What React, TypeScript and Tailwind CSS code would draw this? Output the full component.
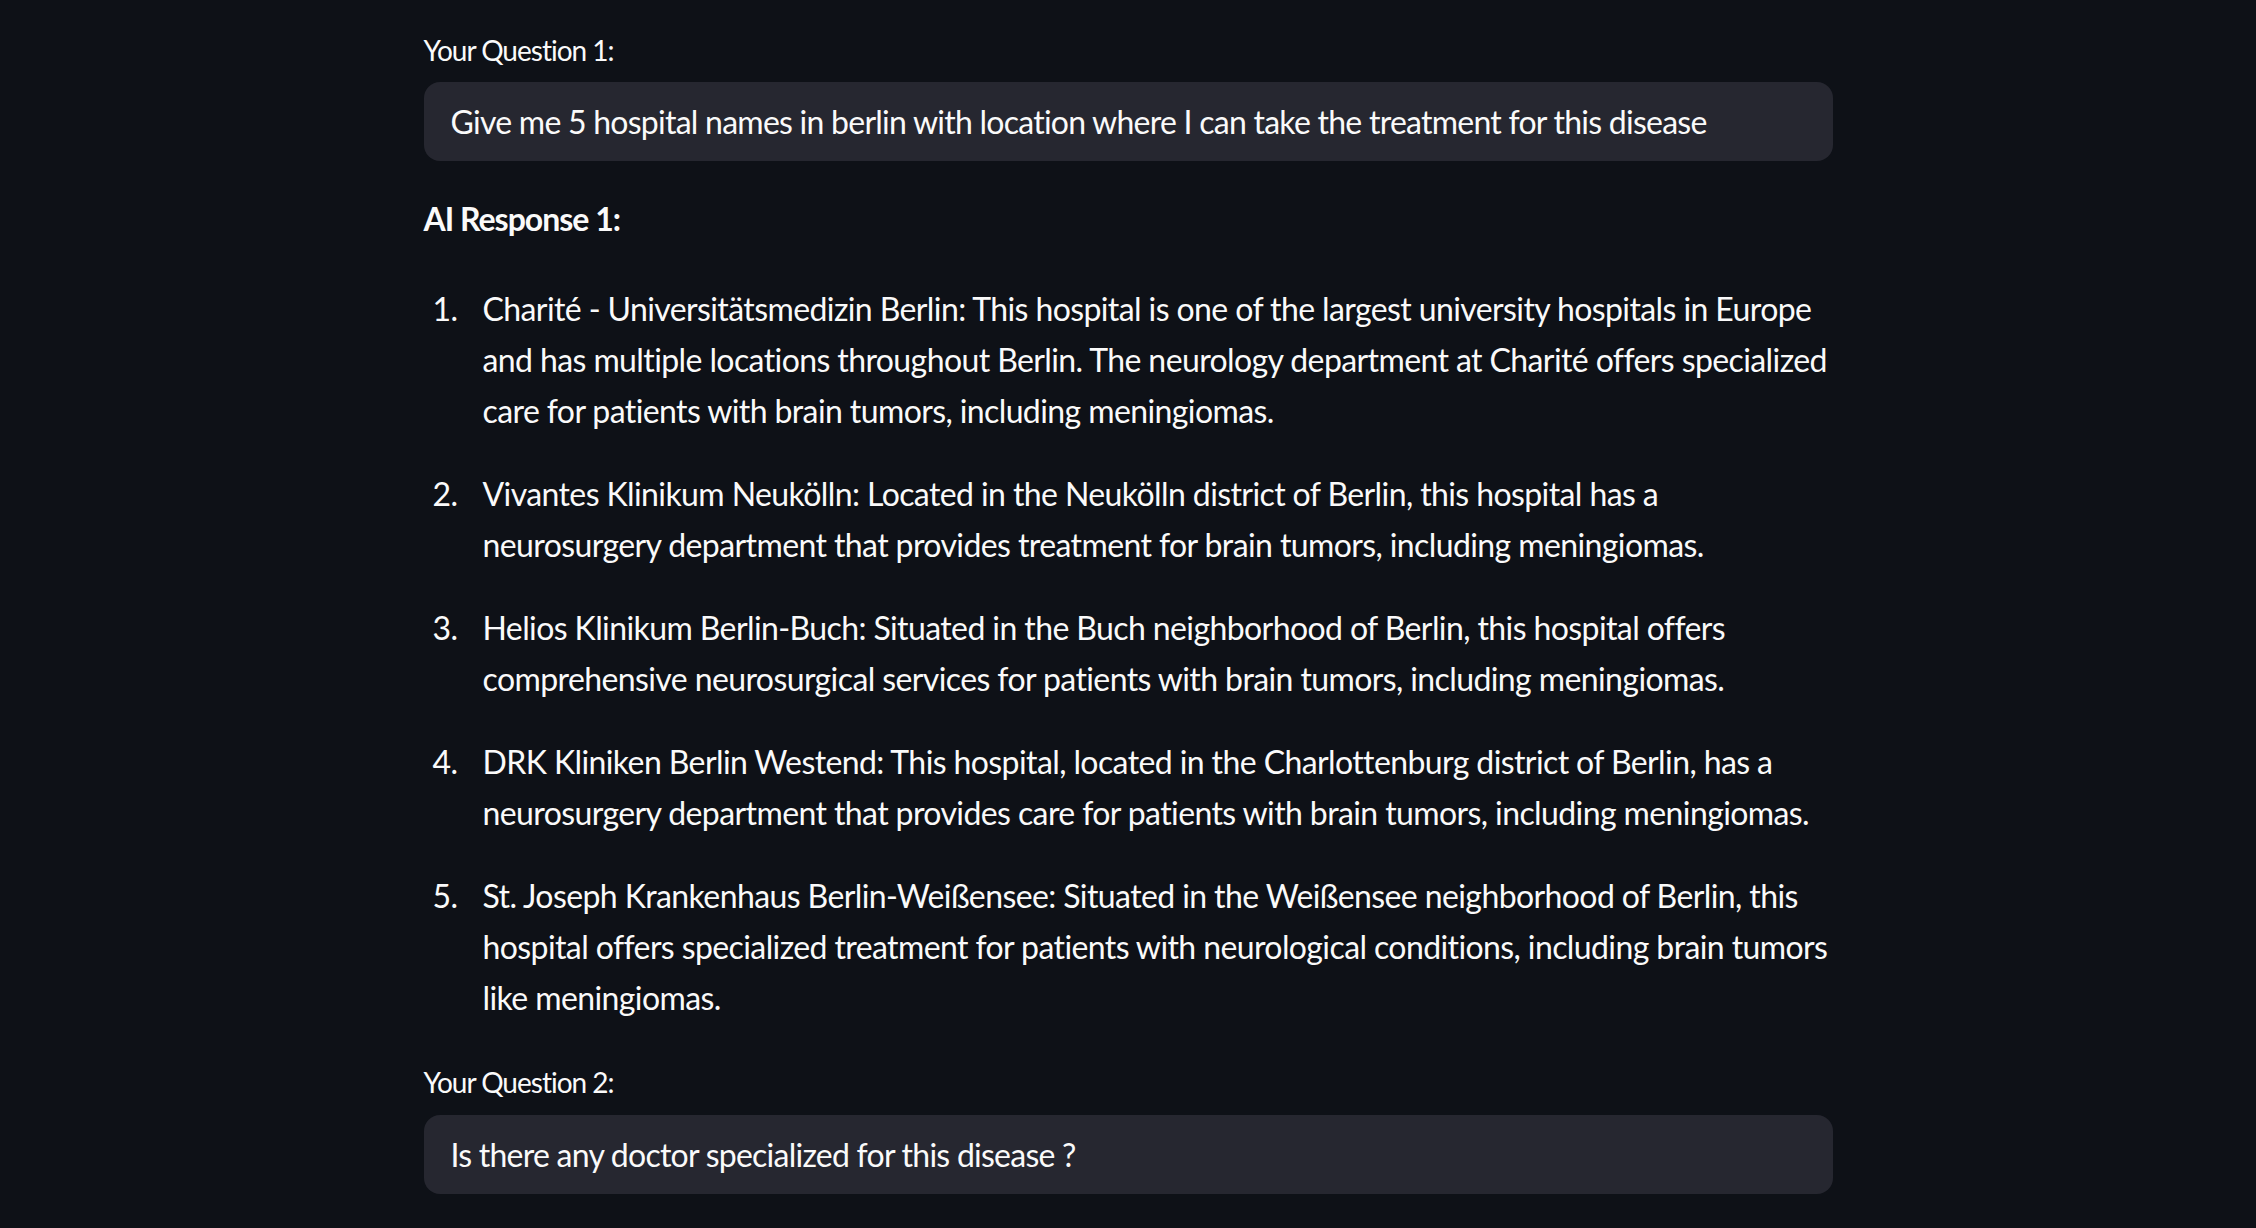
import React from "react";

const items: string[][] = [
  [
    "Charité - Universitätsmedizin Berlin: This hospital is one of the largest university hospitals in Europe",
    "and has multiple locations throughout Berlin. The neurology department at Charité offers specialized",
    "care for patients with brain tumors, including meningiomas.",
  ],
  [
    "Vivantes Klinikum Neukölln: Located in the Neukölln district of Berlin, this hospital has a",
    "neurosurgery department that provides treatment for brain tumors, including meningiomas.",
  ],
  [
    "Helios Klinikum Berlin-Buch: Situated in the Buch neighborhood of Berlin, this hospital offers",
    "comprehensive neurosurgical services for patients with brain tumors, including meningiomas.",
  ],
  [
    "DRK Kliniken Berlin Westend: This hospital, located in the Charlottenburg district of Berlin, has a",
    "neurosurgery department that provides care for patients with brain tumors, including meningiomas.",
  ],
  [
    "St. Joseph Krankenhaus Berlin-Weißensee: Situated in the Weißensee neighborhood of Berlin, this",
    "hospital offers specialized treatment for patients with neurological conditions, including brain tumors",
    "like meningiomas.",
  ],
];

function Label({ text }: { text: string }) {
  return (
    <div className="h-[40px] text-[28px] leading-[40px] text-[#fafafa] tracking-[-1px]">
      {text}
    </div>
  );
}

function Field({ text }: { text: string }) {
  return (
    <div className="flex h-[79px] items-center rounded-[16px] bg-[#262730] pl-[27px] text-[32px] text-[#fafafa] tracking-[-0.75px] whitespace-nowrap">
      {text}
    </div>
  );
}

export default function App() {
  return (
    <div
      className="min-h-[1228px] w-full bg-[#0e1117] text-[#fafafa]"
      style={{ fontFamily: "Lato, 'Noto Sans', sans-serif" }}
    >
      <div className="mx-auto flex w-[1409px] flex-col pt-[30px]">
        <Label text="Your Question 1:" />
        <div className="mt-[12px]">
          <Field text="Give me 5 hospital names in berlin with location where I can take the treatment for this disease" />
        </div>
        <div className="mt-[32px] h-[51px] text-[32px] font-bold leading-[51px] tracking-[-1px]">
          AI Response 1:
        </div>
        <div className="mt-[39px] flex flex-col gap-[32px]">
          {items.map((lines, i) => (
            <div key={i} className="flex text-[32px] leading-[51px] tracking-[-0.6px]">
              <div className="w-[59px] shrink-0 pl-[9px]">{i + 1}.</div>
              <div className="whitespace-nowrap">
                {lines.map((l, j) => (
                  <div key={j}>{l}</div>
                ))}
              </div>
            </div>
          ))}
        </div>
        <div className="mt-[39px]">
          <Label text="Your Question 2:" />
        </div>
        <div className="mt-[13px]">
          <Field text="Is there any doctor specialized for this disease ?" />
        </div>
      </div>
    </div>
  );
}
